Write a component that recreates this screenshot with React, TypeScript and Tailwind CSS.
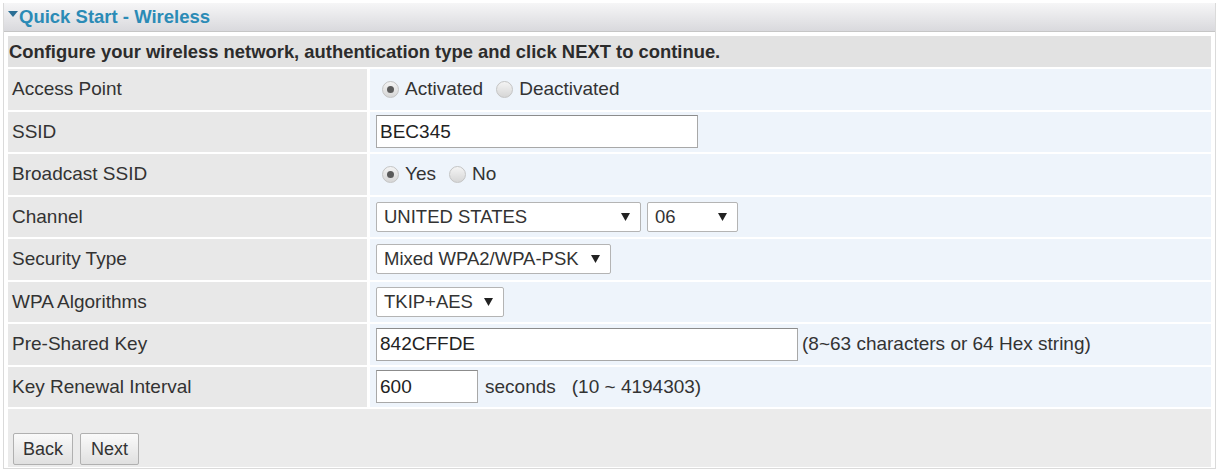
import React from "react";

const Radio = ({ checked, label }: { checked?: boolean; label: string }) => (
  <label className="flex items-center gap-[6px] mr-[13px]">
    <span className="w-[17px] h-[17px] rounded-full border border-[#c4c4c4] bg-gradient-to-b from-[#f4f4f4] to-[#d6d6d6] flex items-center justify-center">
      {checked && <span className="w-[7px] h-[7px] rounded-full bg-[#5a5a5a]" />}
    </span>
    <span>{label}</span>
  </label>
);

const Select = ({ value, width }: { value: string; width: string }) => (
  <div
    className={`${width} h-[30px] border border-[#b4b4b4] rounded-[2px] bg-white flex items-center justify-between pl-[7px] pr-[10px] text-[18.5px] text-[#333]`}
  >
    <span>{value}</span>
    <svg width="9" height="8" viewBox="0 0 9 8">
      <path d="M0 0 H9 L4.5 8 Z" fill="#222" />
    </svg>
  </div>
);

const TextInput = ({ value, width }: { value: string; width: string }) => (
  <input
    readOnly
    value={value}
    className={`${width} h-[33px] border border-[#a8a8a8] border-t-[#8c8c8c] bg-white px-[3px] text-[19px] text-[#222] outline-none`}
  />
);

const Row = ({ label, children }: { label: string; children: React.ReactNode }) => (
  <div className="flex gap-[3px] h-[40.5px]">
    <div className="w-[359px] bg-[#e8e8e8] flex items-center pl-[4px]">{label}</div>
    <div className="flex-1 bg-[#eef4fb] flex items-center pl-[6px]">{children}</div>
  </div>
);

export default function App() {
  return (
    <div className="w-[1223px] h-[473px] bg-white pt-[3px] pl-[3px] font-['Liberation_Sans',Arial,sans-serif] text-[19px] text-[#333]">
      <div className="w-[1213px] border-l border-r border-b border-[#dadada]">
        <div className="h-[29px] bg-gradient-to-b from-[#f6f6f7] to-[#d9d9dd] border-b border-[#c6c6c6] flex items-center pl-[4px] text-[18.5px] font-bold text-[#2b8bb6]">
          <svg width="10" height="7" viewBox="0 0 10 7" className="mr-[1px] mb-[6px]">
            <path d="M0 0 H10 L5 6 Z" fill="#2b6f95" />
          </svg>
          Quick Start - Wireless
        </div>
        <div className="flex flex-col gap-[2px] px-[4px] pt-[4px] pb-[1px]">
          <div className="h-[31px] bg-[#e2e2e2] flex items-center pl-[1px] text-[18.4px] font-bold text-[#2c2c2c]">
            Configure your wireless network, authentication type and click NEXT to continue.
          </div>
          <Row label="Access Point">
            <div className="flex items-center pl-[6px]">
              <Radio checked label="Activated" />
              <Radio label="Deactivated" />
            </div>
          </Row>
          <Row label="SSID">
            <TextInput value="BEC345" width="w-[322px]" />
          </Row>
          <Row label="Broadcast SSID">
            <div className="flex items-center pl-[6px]">
              <Radio checked label="Yes" />
              <Radio label="No" />
            </div>
          </Row>
          <Row label="Channel">
            <div className="flex gap-[6px]">
              <Select value="UNITED STATES" width="w-[265px]" />
              <Select value="06" width="w-[91px]" />
            </div>
          </Row>
          <Row label="Security Type">
            <Select value="Mixed WPA2/WPA-PSK" width="w-[235px]" />
          </Row>
          <Row label="WPA Algorithms">
            <Select value="TKIP+AES" width="w-[128px]" />
          </Row>
          <Row label="Pre-Shared Key">
            <TextInput value="842CFFDE" width="w-[422px]" />
            <span className="ml-[4px]">(8~63 characters or 64 Hex string)</span>
          </Row>
          <Row label="Key Renewal Interval">
            <TextInput value="600" width="w-[102px]" />
            <span className="ml-[7px]">seconds</span>
            <span className="ml-[16px]">(10 ~ 4194303)</span>
          </Row>
          <div className="h-[58px] bg-[#ebebeb] flex items-end gap-[7px] pl-[5px] pb-[2px]">
            <button className="h-[32px] px-[9px] border border-[#b0b0b0] rounded-[2px] bg-gradient-to-b from-[#fafafa] to-[#e0e0e0] text-[18px] text-[#333]">
              Back
            </button>
            <button className="h-[32px] px-[10px] border border-[#b0b0b0] rounded-[2px] bg-gradient-to-b from-[#fafafa] to-[#e0e0e0] text-[18px] text-[#333]">
              Next
            </button>
          </div>
        </div>
      </div>
    </div>
  );
}
